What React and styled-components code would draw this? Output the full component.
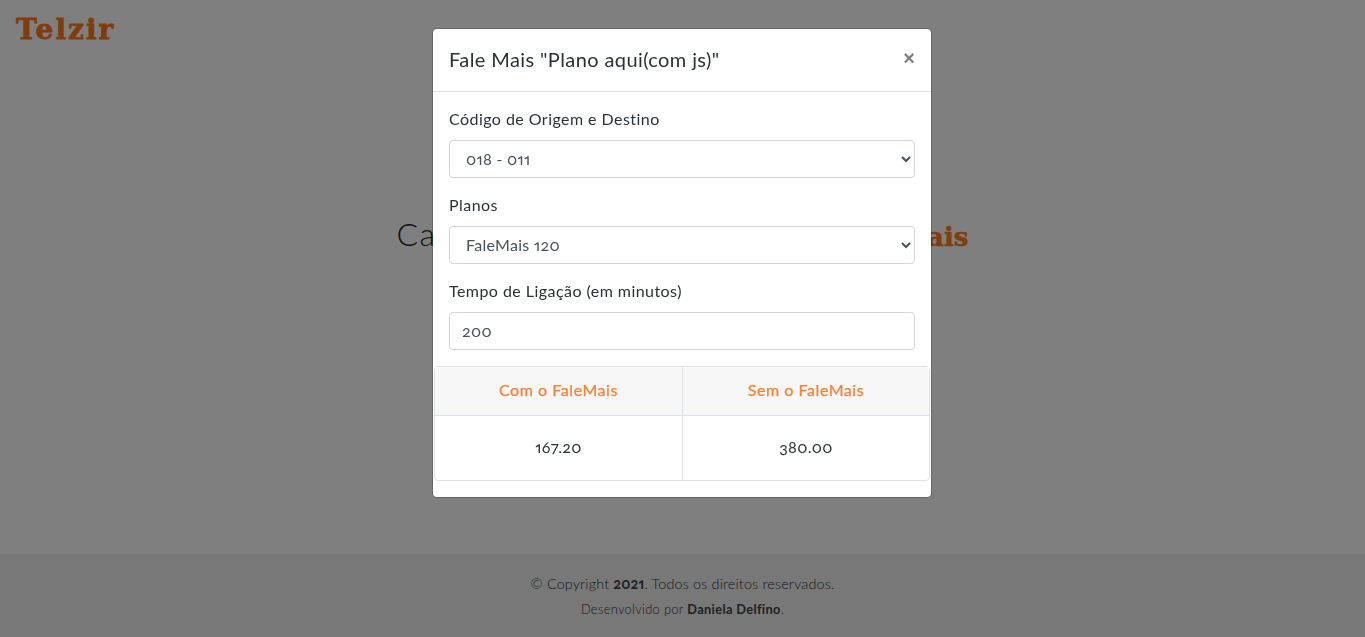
import React from "react";
import styled, { createGlobalStyle } from "styled-components";

const Global = createGlobalStyle`
  html, body { margin: 0; padding: 0; height: 100%; overflow: hidden; }
  body { font-family: "Lato", "Open Sans", sans-serif; font-size: 16px; line-height: 1.5; color: #2c3136; background: #fff; font-feature-settings: "onum", "pnum"; letter-spacing: .45px; }
  * { box-sizing: border-box; }
`;

const Page = styled.div`
  height: 637px;
  display: flex;
  flex-direction: column;
`;
const Nav = styled.header`
  height: 60px;
  padding: 10px 16px;
`;
const Logo = styled.a`
  font-family: "DejaVu Serif", "Liberation Serif", serif;
  font-weight: 700;
  font-size: 28px;
  line-height: 40px;
  letter-spacing: 2px;
  color: #ff7a1a;
  -webkit-text-stroke: .8px #ff7a1a;
`;
const Main = styled.main`
  flex: 1;
  display: flex;
  justify-content: center;
  padding-top: 150px;
`;
const Heading = styled.h1`
  margin: 0;
  font-size: 32px;
  font-weight: 300;
  line-height: 48px;
  letter-spacing: 1.33px;
  color: #212529;
  white-space: nowrap;
`;
const Brand = styled.span`
  font-family: "DejaVu Serif", serif;
  font-weight: 700;
  font-size: 26px;
  letter-spacing: 0;
  color: #ff7a1a;
  -webkit-text-stroke: .5px #ff7a1a;
`;
const Footer = styled.footer`
  height: 83px;
  background: #f0f0f0;
  padding-top: 18px;
  text-align: center;
`;
const Copy = styled.p`
  margin: 0 0 2px;
  font-size: 14.4px;
  line-height: 24px;
  font-weight: 300;
  letter-spacing: .15px;
`;
const Credit = styled.p`
  margin: 0;
  font-size: 12.8px;
  line-height: 22px;
  font-weight: 300;
  letter-spacing: .35px;
`;
const Strong = styled.strong`
  font-weight: 700;
  color: #3d4247;
`;
const Backdrop = styled.div`
  position: fixed;
  inset: 0;
  background: rgba(0, 0, 0, 0.5);
`;
const Dialog = styled.div`
  position: fixed;
  top: 28px;
  left: 432px;
  width: 500px;
  background: #fff;
  border: 1px solid rgba(0, 0, 0, 0.2);
  border-radius: 4.8px;
  background-clip: padding-box;
`;
const DialogHeader = styled.div`
  display: flex;
  justify-content: space-between;
  align-items: flex-start;
  padding: 16px;
  border-bottom: 1px solid #dee2e6;
`;
const Title = styled.h5`
  margin: 0 0 2px;
  font-size: 20px;
  line-height: 28px;
  font-weight: 400;
  letter-spacing: .4px;
`;
const Close = styled.button`
  border: 0;
  background: none;
  padding: 0;
  margin: -1px 0 0 auto;
  width: 12px;
  height: 28px;
  font-family: "Liberation Sans", sans-serif;
  font-size: 20px;
  font-weight: 700;
  line-height: 26px;
  color: #000;
  opacity: .5;
`;
const Body = styled.div`
  padding: 16px;
`;
const Group = styled.div`
  margin-bottom: 16px;
`;
const Label = styled.label`
  display: block;
  margin-bottom: 10px;
  line-height: 22px;
`;
const fieldCss = `
  display: block;
  width: 100%;
  height: 38px;
  padding: 5px 12px 7px;
  font: inherit;
  letter-spacing: .3px;
  color: #495057;
  background: #fff;
  border: 1px solid #ced4da;
  border-radius: 4px;
  outline: none;
`;
const Select = styled.select`${fieldCss}`;
const Input = styled.input`${fieldCss}`;
const Table = styled.table`
  width: 496px;
  margin: 0 -15px;
  border-collapse: separate;
  border-spacing: 0;
  table-layout: fixed;
  border: 1px solid #dee2e6;
  border-radius: 4px;
  letter-spacing: .3px;
`;
const Th = styled.th`
  height: 49px;
  padding: 0 0 2px;
  background: #f7f7f7;
  color: #fd7e35;
  font-weight: 400;
  letter-spacing: .55px;
  -webkit-text-stroke: .25px #fd7e35;
  text-align: center;
  border-bottom: 1px solid #dee2e6;
  &:first-child { width: 248px; border-right: 1px solid #dee2e6; }
`;
const Td = styled.td`
  height: 64px;
  padding: 0 0 2px;
  text-align: center;
  &:first-child { border-right: 1px solid #dee2e6; }
`;

export default function App() {
  return (
    <>
      <Global />
      <Page>
        <Nav><Logo>Telzir</Logo></Nav>
        <Main>
          <Heading>Calcule sua ligação usando o <Brand>FaleMais</Brand></Heading>
        </Main>
        <Footer>
          <Copy>© Copyright <Strong>2021</Strong>. Todos os direitos reservados.</Copy>
          <Credit>Desenvolvido por <Strong>Daniela Delfino</Strong>.</Credit>
        </Footer>
      </Page>
      <Backdrop />
      <Dialog>
        <DialogHeader>
          <Title>Fale Mais "Plano aqui(com js)"</Title>
          <Close aria-label="Fechar">×</Close>
        </DialogHeader>
        <Body>
          <Group>
            <Label>Código de Origem e Destino</Label>
            <Select defaultValue="018 - 011"><option>018 - 011</option></Select>
          </Group>
          <Group>
            <Label>Planos</Label>
            <Select defaultValue="FaleMais 120"><option>FaleMais 120</option></Select>
          </Group>
          <Group>
            <Label>Tempo de Ligação (em minutos)</Label>
            <Input defaultValue="200" />
          </Group>
          <Table>
            <thead><tr><Th>Com o FaleMais</Th><Th>Sem o FaleMais</Th></tr></thead>
            <tbody><tr><Td>167.20</Td><Td>380.00</Td></tr></tbody>
          </Table>
        </Body>
      </Dialog>
    </>
  );
}
